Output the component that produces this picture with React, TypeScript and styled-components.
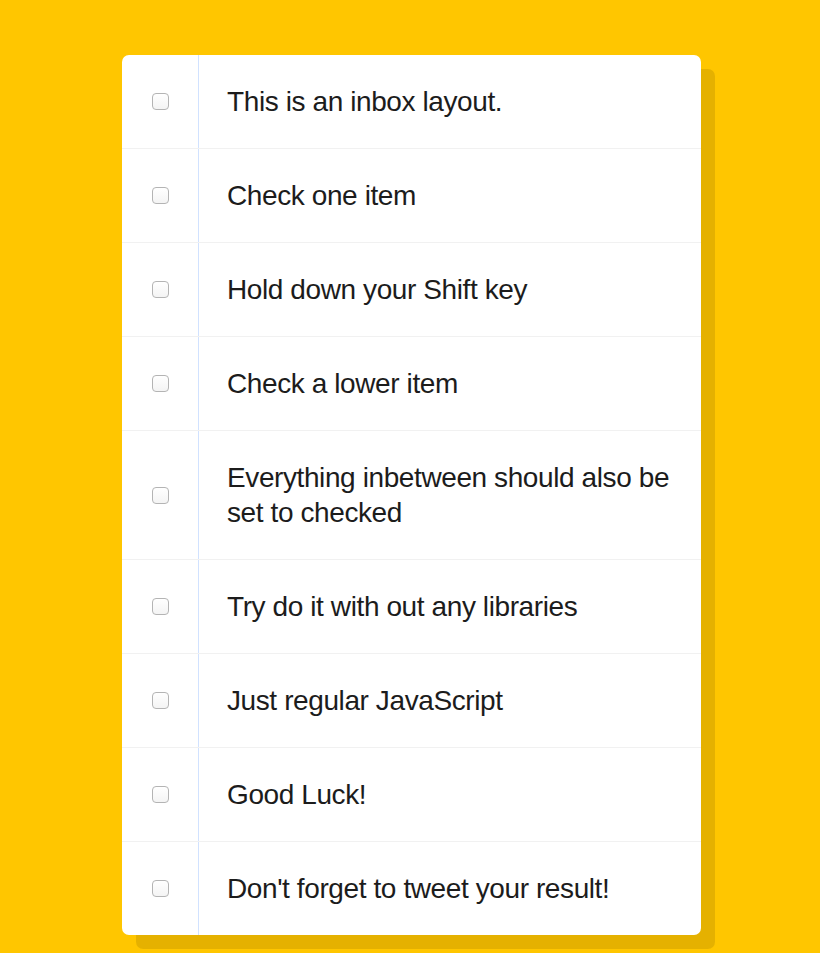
import styled, { createGlobalStyle } from "styled-components";

const GlobalStyle = createGlobalStyle`
  html, body {
    margin: 0;
    padding: 0;
    background: #ffc600;
  }
`

const Page = styled.div`
    padding: 55px 0 0 3px;
    box-sizing: border-box;
    min-height: 953px;
`

const Inbox = styled.div`
    width: 579px;
    margin: 0 auto;
    background: #fff;
    border-radius: 7px;
    box-shadow: 14px 14px 0 rgba(0, 0, 0, 0.1);
`

const Item = styled.label`
    display: flex;
    align-items: stretch;
    border-bottom: 1px solid #f1f1f1;
    &:last-child {
        border-bottom: 0;
    }
`

const CheckCell = styled.div`
    width: 76px;
    flex: none;
    display: flex;
    align-items: center;
    justify-content: center;
`

const Box = styled.span`
    width: 15px;
    height: 15px;
    border: 1px solid #b4b4b4;
    border-radius: 4px;
    background: linear-gradient(#fff, #f4f4f4);
`

const Text = styled.p`
    margin: 0;
    flex: 1;
    padding: 29px 18px 29px 28px;
    border-left: 1px solid #d1e2ff;
    font-family: "Liberation Sans", Arial, sans-serif;
    font-size: 28px;
    font-weight: 400;
    line-height: 35px;
    color: #1c1c1c;
    letter-spacing: -0.4px;
`

const items = [
    "This is an inbox layout.",
    "Check one item",
    "Hold down your Shift key",
    "Check a lower item",
    "Everything inbetween should also be set to checked",
    "Try do it with out any libraries",
    "Just regular JavaScript",
    "Good Luck!",
    "Don't forget to tweet your result!",
]

export default function App() {
    return (
        <Page>
            <GlobalStyle />
            <Inbox>
                {items.map((t) => (
                    <Item key={t}>
                        <CheckCell>
                            <Box />
                        </CheckCell>
                        <Text>{t}</Text>
                    </Item>
                ))}
            </Inbox>
        </Page>
    );
}
